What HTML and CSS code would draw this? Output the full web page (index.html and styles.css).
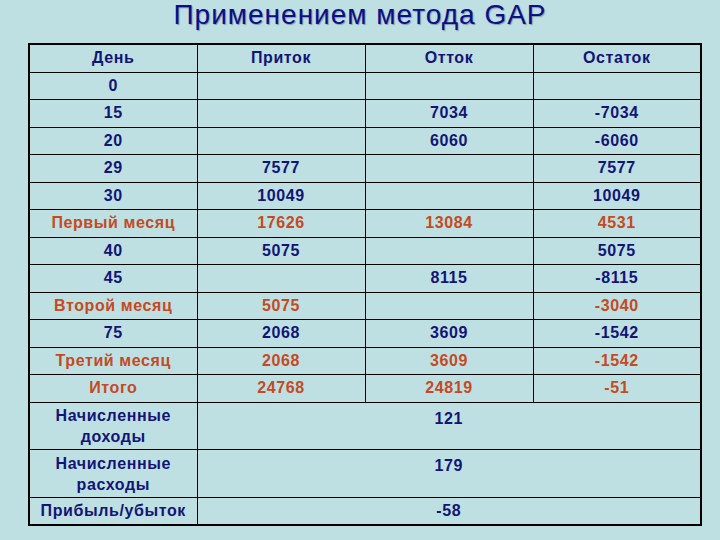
FILE: index.html
```html
<!DOCTYPE html>
<html lang="ru">
<head>
<meta charset="utf-8">
<title>Применением метода GAP</title>
<link rel="stylesheet" href="styles.css">
</head>
<body>
<h1 class="title">Применением метода GAP</h1>
<table class="gap">
  <colgroup><col class="c"><col class="c"><col class="c"><col class="c"></colgroup>
  <tr><td>День</td><td>Приток</td><td>Отток</td><td>Остаток</td></tr>
  <tr><td>0</td><td></td><td></td><td></td></tr>
  <tr><td>15</td><td></td><td>7034</td><td>-7034</td></tr>
  <tr><td>20</td><td></td><td>6060</td><td>-6060</td></tr>
  <tr><td>29</td><td>7577</td><td></td><td>7577</td></tr>
  <tr><td>30</td><td>10049</td><td></td><td>10049</td></tr>
  <tr class="sum"><td>Первый месяц</td><td>17626</td><td>13084</td><td>4531</td></tr>
  <tr><td>40</td><td>5075</td><td></td><td>5075</td></tr>
  <tr><td>45</td><td></td><td>8115</td><td>-8115</td></tr>
  <tr class="sum"><td>Второй месяц</td><td>5075</td><td></td><td>-3040</td></tr>
  <tr><td>75</td><td>2068</td><td>3609</td><td>-1542</td></tr>
  <tr class="sum"><td>Третий месяц</td><td>2068</td><td>3609</td><td>-1542</td></tr>
  <tr class="sum"><td>Итого</td><td>24768</td><td>24819</td><td>-51</td></tr>
  <tr class="tall"><td>Начисленные<br>доходы</td><td class="top" colspan="3">121</td></tr>
  <tr class="tall"><td>Начисленные<br>расходы</td><td class="top" colspan="3">179</td></tr>
  <tr class="last"><td>Прибыль/убыток</td><td colspan="3">-58</td></tr>
</table>
</body>
</html>
```
FILE: styles.css
```css
html, body {
  margin: 0;
  padding: 0;
  background: #bee0e2;
}
body {
  width: 720px;
  height: 540px;
  overflow: hidden;
  font-family: "Liberation Sans", Arial, sans-serif;
}
.title {
  margin: 0;
  height: 43px;
  padding-top: 1px;
  box-sizing: border-box;
  font-size: 28px;
  line-height: 28px;
  letter-spacing: 1px;
  font-weight: normal;
  text-align: center;
  color: #0c0e8a;
  text-shadow: 1px 1px 1px rgba(60, 70, 90, 0.45);
}
.gap {
  margin-left: 28px;
  width: 672px;
  table-layout: fixed;
  border-collapse: collapse;
  border: 2px solid #000;
}
.gap .c { width: 168px; }
.gap td {
  border: 1px solid #000;
  padding: 0;
  height: 26.5px;
  text-align: center;
  vertical-align: middle;
  font-size: 16px;
  letter-spacing: 0.6px;
  font-weight: bold;
  color: #121476;
}
.gap tr.sum td { color: #c44a22; }
.gap tr.tall td {
  height: 46.8px;
  line-height: 21px;
}
.gap tr.tall td.top {
  vertical-align: top;
  padding-top: 5px;
  height: 41.8px;
}
.gap tr.last td { height: 26px; }
```
